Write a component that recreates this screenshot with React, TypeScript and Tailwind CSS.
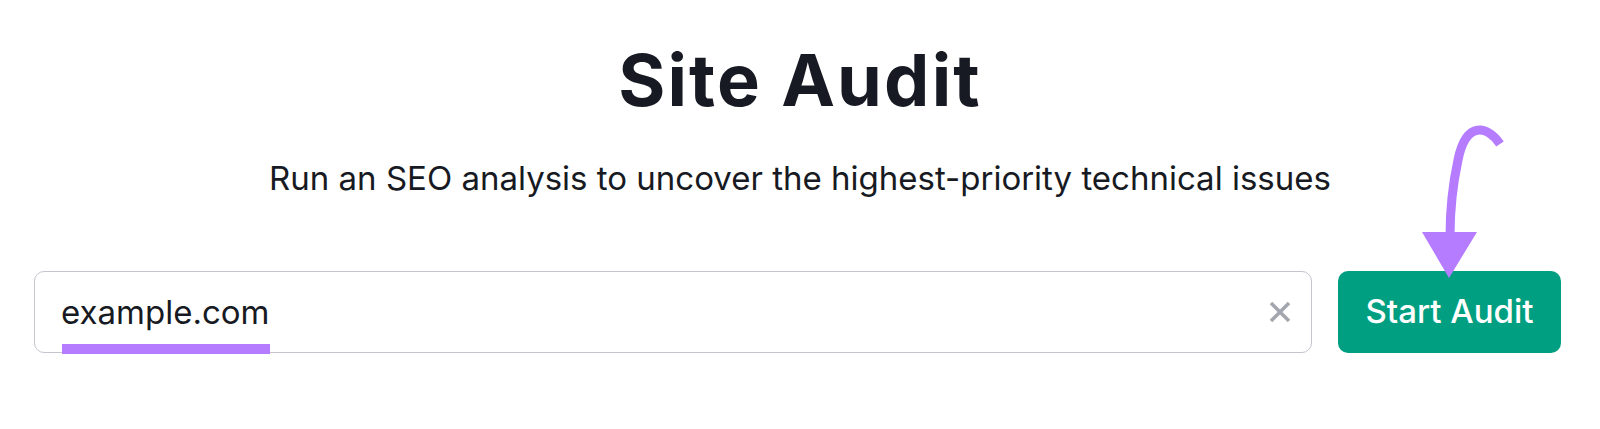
const FONT = { fontFamily: 'Inter, "Noto Sans", sans-serif' }

export default function App() {
  return (
    <div className="relative w-[1600px] h-[429px] bg-white text-[#171a22] flex flex-col items-center" style={FONT}>
      <h1 className="mt-[44px] text-[72px] leading-[72px] font-bold tracking-[0.03em]">Site Audit</h1>
      <p className="mt-[46px] text-[33px] leading-[33px]">
        Run an SEO analysis to uncover the highest-priority technical issues
      </p>

      <div className="mt-[76px] w-full pl-[34px] pr-[39px] flex gap-[26px]">
        <div className="relative flex-1 h-[82px] border border-[#c3c6cf] rounded-[10px] flex items-center pl-[26px] pr-[20px]">
          <span className="flex-1 text-[33px] leading-[33px]">example.com</span>
          <svg className="w-[22px] h-[22px] text-[#a3a5af]" viewBox="0 0 22 22" fill="none" stroke="currentColor" strokeWidth="3.5">
            <path d="M2 2 L20 20 M20 2 L2 20" />
          </svg>
          {/* highlight under the domain */}
          <div className="absolute left-[27px] top-[72px] w-[208px] h-[10px] bg-[#b67cff]" />
        </div>
        <button className="w-[223px] h-[82px] rounded-[10px] bg-[#009f81] text-white text-[33px] font-medium">
          Start Audit
        </button>
      </div>

      {/* annotation arrow pointing at the button */}
      <svg className="absolute left-0 top-0 w-[1600px] h-[429px] pointer-events-none" viewBox="0 0 1600 429">
        <path
          d="M1500 144 C1488 126 1466 120 1458 160 C1452 188 1450 212 1450 236"
          fill="none"
          stroke="#b67cff"
          strokeWidth="9"
        />
        <path d="M1422 232 L1477 232 L1449 278 Z" fill="#b67cff" />
      </svg>
    </div>
  )
}
